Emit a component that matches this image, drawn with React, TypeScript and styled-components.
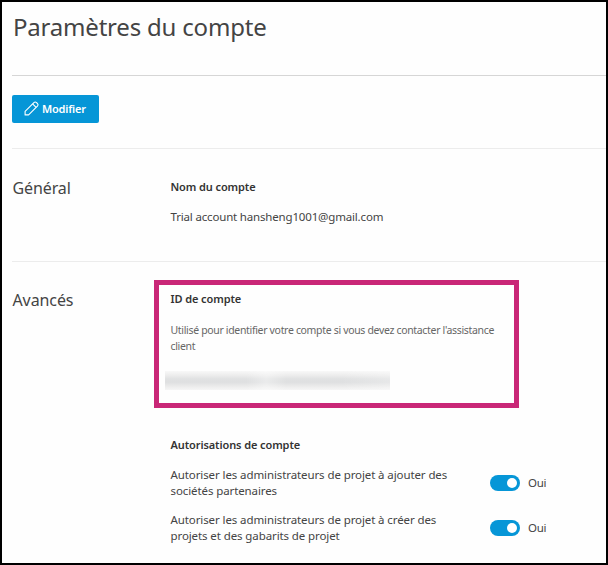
import React, {useState} from "react";
import styled, {createGlobalStyle} from "styled-components";

const GlobalStyle = createGlobalStyle`
  * {
    box-sizing: border-box;
  }

  body {
    margin: 0;
    background: #fff;
    color: #444;
    font-family: "Noto Sans", "Open Sans", sans-serif;
  }

  h1, h2, h3, p {
    margin: 0;
  }
`

const Page = styled.main`
  width: 608px;
  height: 565px;
  padding-left: 10px;
  border: 2px solid #000;
  background: #fefefe;
  overflow: hidden;
`

const Header = styled.header`
  height: 74px;
  padding: 8px 0 0 1px;
  border-bottom: 1px solid #d6d6d6;
`

const Title = styled.h1`
  font-size: 24px;
  font-weight: 400;
  line-height: 34px;
  letter-spacing: -0.2px;
`

const Toolbar = styled.div`
  height: 73px;
  padding-top: 19px;
  border-bottom: 1px solid #ececec;
`

const EditButton = styled.button`
  display: flex;
  align-items: center;
  gap: 3px;
  width: 87px;
  height: 28px;
  padding: 0 0 2px 12px;
  border: 0;
  border-radius: 2px;
  background: #0696d7;
  color: #fff;
  font-family: inherit;
  font-size: 11px;
  font-weight: 600;
  letter-spacing: -0.2px;
  cursor: pointer;
`

const Section = styled.section<{ $height?: number }>`
  display: grid;
  grid-template-columns: 158.5px 1fr;
  height: ${props => props.$height ? `${props.$height}px` : "auto"};
  padding-top: 29px;
  border-bottom: ${props => props.$height ? "1px solid #ececec" : "0"};
`

const SectionTitle = styled.h2<{ $lift?: number }>`
  margin-top: ${props => -(props.$lift ?? 1)}px;
  padding-left: 0.5px;
  font-size: 16px;
  font-weight: 400;
  line-height: 22px;
  letter-spacing: -0.1px;
`

const FieldTitle = styled.h3`
  font-size: 11px;
  font-weight: 600;
  line-height: 16px;
  letter-spacing: -0.1px;
  color: #333;
`

const Field = styled.div`
  padding-top: 1px;
`

const FieldValue = styled.p`
  margin-top: 14px;
  font-size: 11.5px;
  line-height: 16px;
  letter-spacing: -0.17px;
`

const Highlight = styled.div`
  width: 365px;
  height: 128px;
  margin: -11px 0 29px -16.5px;
  padding: 6px 6px 0 11.5px;
  border: 5px solid #c92777;
`

const Hint = styled.p`
  width: 332px;
  margin-top: 15px;
  font-size: 10.5px;
  line-height: 16px;
  letter-spacing: -0.33px;
  color: #666;
`

const MaskedId = styled.div`
  width: 225px;
  height: 19px;
  margin: 17px 0 0 -5.5px;
  background:
    linear-gradient(90deg, transparent 0 36%, rgba(255, 255, 255, 0.35) 45%, transparent 54% 78%, rgba(255, 255, 255, 0.25)),
    linear-gradient(#f8f8f8, #ededed 22%, #e0e1e2 42%, #dfe0e1 60%, #ebebeb 80%, #f6f6f6);
`

const Permission = styled.div`
  display: grid;
  grid-template-columns: 319.5px 30px auto;
  align-items: center;
  margin-top: 14px;

  & + & {
    margin-top: 13px;
  }
`

const PermissionLabel = styled.p`
  width: 290px;
  font-size: 11.5px;
  line-height: 16px;
  letter-spacing: -0.1px;
`

const Switch = styled.button<{ $on: boolean }>`
  display: flex;
  align-items: center;
  justify-content: ${props => props.$on ? "flex-end" : "flex-start"};
  width: 30px;
  height: 16px;
  padding: 0 3px;
  border: 0;
  border-radius: 8px;
  background: ${props => props.$on ? "#0696d7" : "#aaa"};
  cursor: pointer;
`

const Handle = styled.span`
  width: 10px;
  height: 10px;
  border-radius: 50%;
  background: #fff;
`

const SwitchText = styled.span`
  padding-left: 8px;
  font-size: 11.5px;
  line-height: 16px;
  letter-spacing: -0.3px;
`

const PencilIcon = () => (
    <svg width="15" height="15" viewBox="0 0 15 15" fill="none" stroke="#fff" strokeWidth="1.1" strokeLinejoin="round">
        <path d="M1.1 13.9V10.4L9.9 1.6Q11.2.4 12.5 1.6L13.4 2.5Q14.6 3.8 13.4 5.1L4.6 13.9Z"/>
        <path d="M8.6 2.9 12.1 6.4"/>
    </svg>
)

const PermissionRow = ({label}: { label: string }) => {
    const [isOn, setIsOn] = useState(true);

    return (
        <Permission>
            <PermissionLabel>{label}</PermissionLabel>
            <Switch $on={isOn} role="switch" aria-checked={isOn} onClick={() => setIsOn(!isOn)}>
                <Handle/>
            </Switch>
            <SwitchText>{isOn ? "Oui" : "Non"}</SwitchText>
        </Permission>
    )
}

const App = () => {
    return (
        <Page>
            <GlobalStyle/>
            <Header>
                <Title>Paramètres du compte</Title>
            </Header>
            <Toolbar>
                <EditButton><PencilIcon/>Modifier</EditButton>
            </Toolbar>

            <Section $height={113}>
                <SectionTitle>Général</SectionTitle>
                <Field>
                    <FieldTitle>Nom du compte</FieldTitle>
                    <FieldValue>Trial account hansheng1001@gmail.com</FieldValue>
                </Field>
            </Section>

            <Section>
                <SectionTitle $lift={2}>Avancés</SectionTitle>
                <div>
                    <Highlight>
                        <FieldTitle>ID de compte</FieldTitle>
                        <Hint>Utilisé pour identifier votre compte si vous devez contacter l'assistance client</Hint>
                        <MaskedId/>
                    </Highlight>
                    <FieldTitle>Autorisations de compte</FieldTitle>
                    <PermissionRow label="Autoriser les administrateurs de projet à ajouter des sociétés partenaires"/>
                    <PermissionRow label="Autoriser les administrateurs de projet à créer des projets et des gabarits de projet"/>
                </div>
            </Section>
        </Page>
    )
}

export default App
